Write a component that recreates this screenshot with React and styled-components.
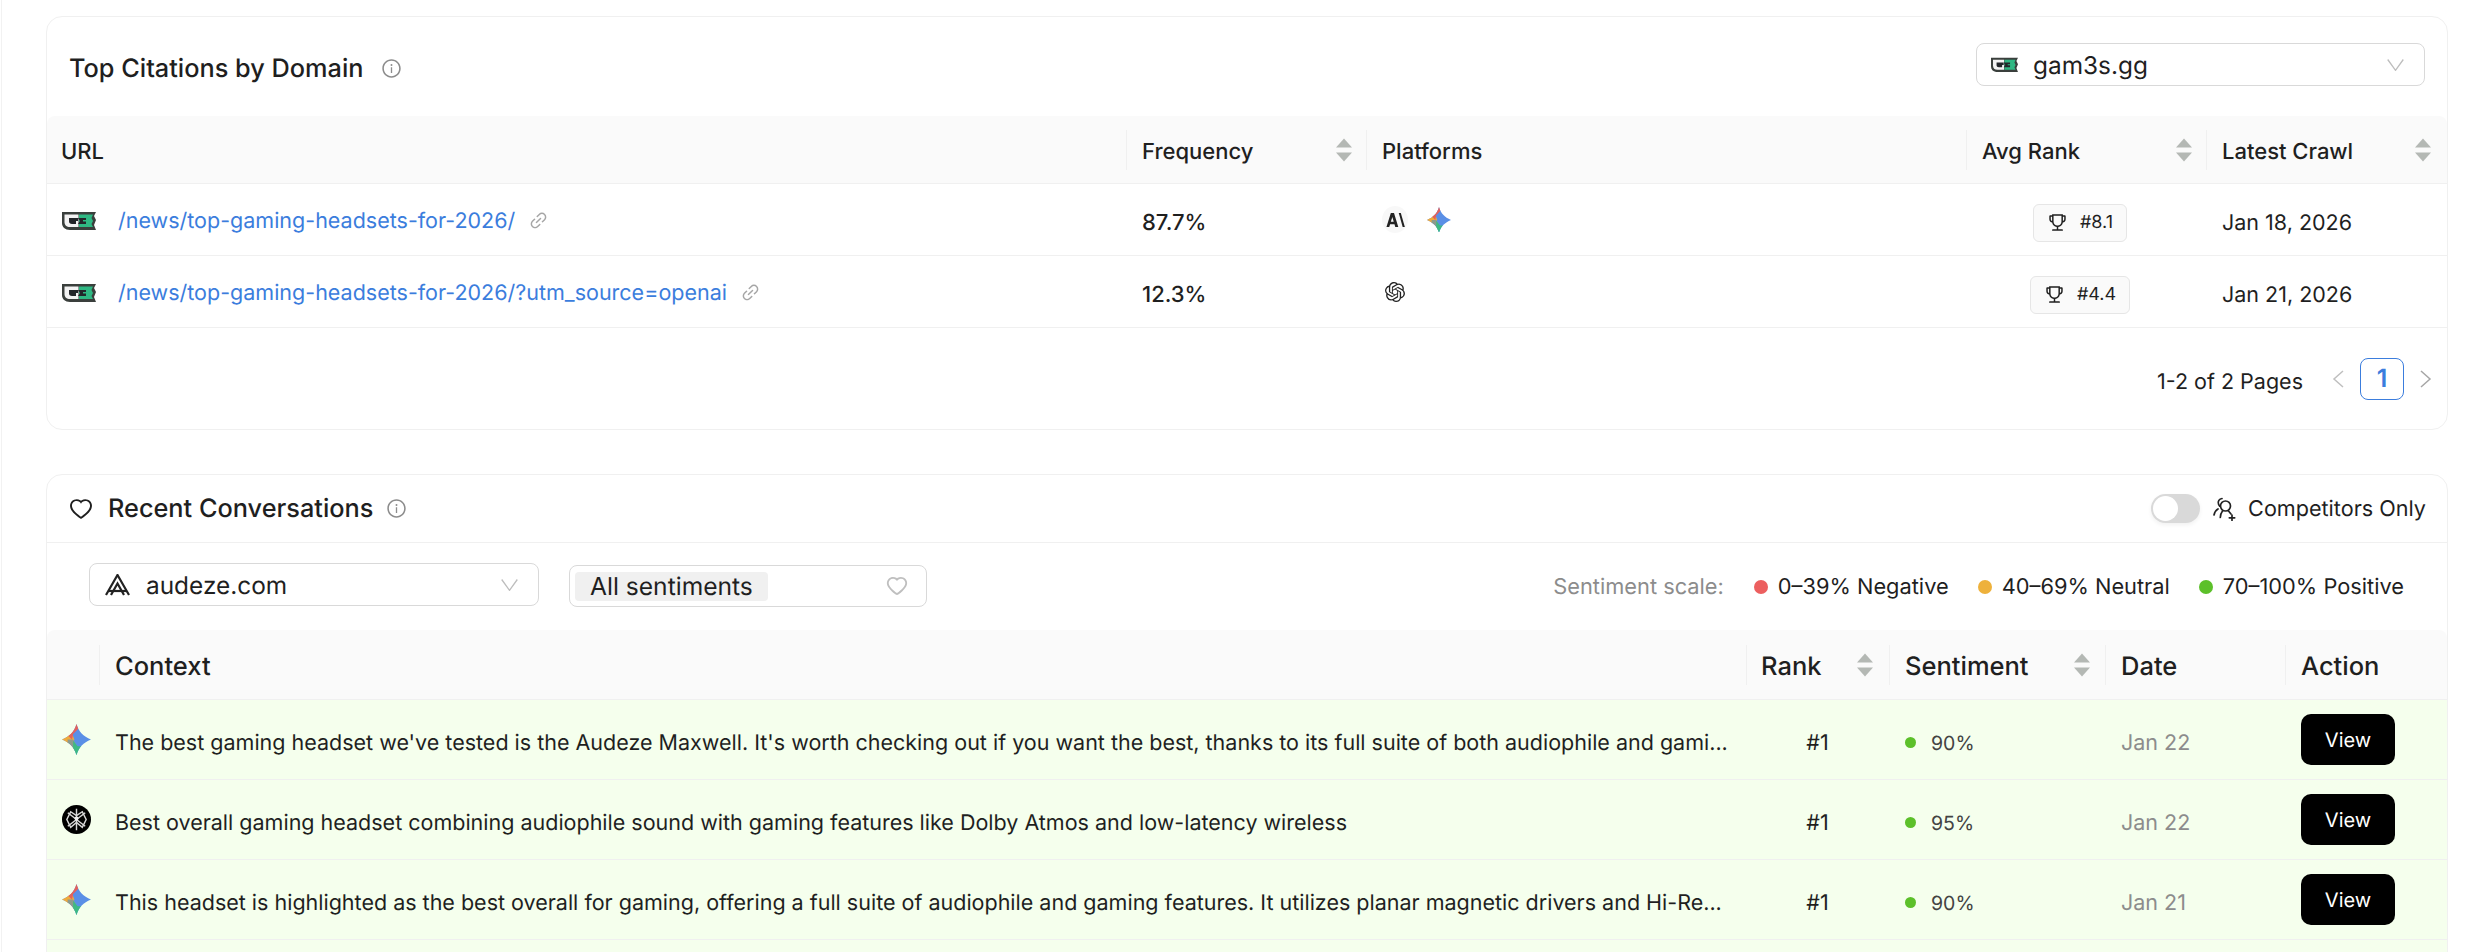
import React from 'react';
import styled, { createGlobalStyle } from 'styled-components';
import {
  AiOutlineInfoCircle,
  AiOutlineHeart,
  AiOutlineLink,
  AiOutlineTrophy,
} from 'react-icons/ai';
import { SiOpenai } from 'react-icons/si';

const GlobalStyle = createGlobalStyle`
  html, body {
    margin: 0;
    height: 952px;
    overflow: hidden;
    background: #fff;
  }
  body {
    font-family: Inter, "Liberation Sans", sans-serif;
    text-rendering: geometricPrecision;
    color: #1f1f1f;
  }
  * { box-sizing: border-box; }
`;

const Page = styled.div`
  height: 952px;
  overflow: hidden;
  margin-left: 1px;
  border-left: 1px solid #f2f2f2;
  padding: 16px 44px 0 44px;
  display: flex;
  flex-direction: column;
  gap: 44px;
  width: 2491px;
`;

const Card = styled.section`
  width: 2402px;
  flex: none;
  border: 1px solid #f0f0f0;
  border-radius: 16px;
  background: #fff;
`;

const CitationsHead = styled.header`
  height: 99px;
  display: flex;
  align-items: center;
  justify-content: space-between;
  padding: 0 22px;
`;

const Title = styled.h2`
  margin: 0;
  font-size: 25.300px;
  font-weight: 500;
  line-height: 30px;
  display: flex;
  align-items: center;
  gap: ${p => p.$gap || 18}px;
`;

const CitationTitle = styled(Title)`
  margin-top: 4px;
`;

const InfoIcon = styled(AiOutlineInfoCircle)`
  font-size: 21px;
  color: #8c8c8c;
  flex: none;
`;

const Select = styled.div`
  width: ${p => p.$width}px;
  height: ${p => p.$height || 43}px;
  border: 1px solid #d9d9d9;
  border-radius: 8px;
  display: flex;
  align-items: center;
  gap: ${p => p.$gap || 15}px;
  padding: 0 ${p => p.$right || 20}px 0 ${p => p.$left || 14}px;
  font-size: 24.400px;
  background: #fff;
  flex: none;
`;

const CitationSelect = styled(Select)`
  margin-bottom: 4px;
`;

const SelectValue = styled.span`
  flex: 1;
`;

const ChevronSvg = styled.svg`
  width: 17px;
  height: 12px;
  flex: none;
`;

const Chevron = () => (
  <ChevronSvg viewBox="0 0 17 12" fill="none" stroke="#bdbdbd" strokeWidth="1.300">
    <path d="M0.700 0.500L8.500 11.300 16.300 0.500" />
  </ChevronSvg>
);

const Table = styled.table`
  width: 2400px;
  table-layout: fixed;
  border-collapse: separate;
  border-spacing: 0;
`;

const Col = styled.col`
  width: ${p => p.$width}px;
`;

const Th = styled.th`
  position: relative;
  height: ${p => p.$height}px;
  padding: ${p => p.$top ?? 4}px 0 0 ${p => p.$pad ?? 16}px;
  background: #fafafa;
  border-bottom: 1px solid #f0f0f0;
  text-align: left;
  font-size: ${p => p.$size}px;
  font-weight: 500;

  &:first-child { border-top-left-radius: 8px; }
  &:last-child { border-top-right-radius: 8px; }

  ${p => p.$divider && `
    &::before {
      content: '';
      position: absolute;
      left: 0;
      top: 50%;
      height: 40px;
      width: 1px;
      transform: translateY(-50%);
      background: #f0f0f0;
    }
  `}
`;

const Sorter = styled.span`
  position: absolute;
  right: ${p => p.$right}px;
  top: 50%;
  transform: translateY(-50%);
  display: flex;
  flex-direction: column;
  gap: 5px;

  &::before, &::after {
    content: '';
    width: 0;
    height: 0;
    border-left: 8px solid transparent;
    border-right: 8px solid transparent;
  }
  &::before { border-bottom: 9px solid #b4b8b4; }
  &::after { border-top: 9px solid #b4b8b4; }
`;

const Row = styled.tr`
  background: ${p => (p.$tint ? '#f5ffed' : '#fff')};
`;

const Td = styled.td`
  height: ${p => p.$height}px;
  padding: ${p => p.$top || 0}px ${p => p.$padRight || 0}px 0 ${p => p.$pad ?? 16}px;
  border-bottom: 1px solid #f0f0f0;
  font-size: ${p => p.$size || 21.5}px;
  font-weight: ${p => p.$weight || 400};
  color: ${p => p.$color || '#1f1f1f'};
  text-align: ${p => p.$align || 'left'};
  white-space: nowrap;
`;

const UrlCell = styled.div`
  display: flex;
  align-items: center;
`;

const UrlLink = styled.a`
  color: #3b7ddd;
  font-size: 21.5px;
  margin-left: 22px;
  text-decoration: none;
`;

const LinkIcon = styled(AiOutlineLink)`
  font-size: 21px;
  color: #a6a6a6;
  margin-left: 13px;
`;

const PlatformRow = styled.div`
  display: flex;
  align-items: center;
  gap: 19px;
`;

const ClaudeMark = styled.span`
  width: 26px;
  height: 27px;
  border-radius: 50%;
  background: #f8f8f8;
  display: flex;
  align-items: center;
  justify-content: center;
`;

const OpenAiMark = styled(SiOpenai)`
  font-size: 20px;
  margin-left: 3px;
  color: #222;
`;

const RankBadge = styled.span`
  display: inline-flex;
  align-items: center;
  gap: 12px;
  height: 38px;
  padding: 0 13px;
  border: 1px solid #e6e6e6;
  border-radius: 6px;
  background: #fafafa;
  font-size: 18px;
  vertical-align: middle;
`;

const TrophyIcon = styled(AiOutlineTrophy)`
  font-size: 21px;
`;

const Pagination = styled.nav`
  height: 101px;
  display: flex;
  align-items: center;
  justify-content: flex-end;
  padding: 0 15px 0 0;
  font-size: 21.5px;
`;

const PageInfo = styled.span`
  margin: 6px 29px 0 0;
`;

const PageChevronSvg = styled.svg`
  width: 13px;
  height: 18px;
  flex: none;
`;

const PageChevron = ({ color, flip }) => (
  <PageChevronSvg viewBox="0 0 13 18" fill="none" stroke={color} strokeWidth="1.500">
    <path d={flip ? 'M2 1l9 8-9 8' : 'M11 1L2 9l9 8'} />
  </PageChevronSvg>
);

const PageNumber = styled.span`
  width: 44px;
  height: 42px;
  margin: 0 15px;
  border: 1px solid #3b7ddd;
  border-radius: 8px;
  display: flex;
  align-items: center;
  justify-content: center;
  color: #3b7ddd;
  font-weight: 600;
  font-size: 25px;
`;

const ConversationsHead = styled.header`
  height: 68px;
  border-bottom: 1px solid #f0f0f0;
  display: flex;
  align-items: center;
  justify-content: space-between;
  padding: 0 21px;
`;

const TitleGroup = styled.div`
  display: flex;
  align-items: center;
`;

const HeartIcon = styled(AiOutlineHeart)`
  font-size: 26px;
  margin-right: 14px;
`;

const ToggleGroup = styled.div`
  display: flex;
  align-items: center;
  font-size: 21.6px;
  gap: 12px;
`;

const Toggle = styled.span`
  position: relative;
  width: 49px;
  height: 29px;
  border-radius: 15px;
  background: #d9d9d9;
  box-shadow: 0 2px 4px rgba(0, 0, 0, 0.06);

  &::after {
    content: '';
    position: absolute;
    left: 2px;
    top: 2px;
    width: 25px;
    height: 25px;
    border-radius: 50%;
    background: #fff;
  }
`;

const FilterBar = styled.div`
  height: 87px;
  display: flex;
  align-items: flex-start;
  padding: 20px 43px 0 42px;
`;

const SentimentSelect = styled(Select)`
  margin: 2px 0 0 30px;
  padding: 0 17px 0 5px;
`;

const SentimentTag = styled.span`
  width: 193px;
  height: 29px;
  background: #f0f0f0;
  border-radius: 4px;
  padding-left: 15px;
  display: flex;
  align-items: center;
  font-size: 24.600px;
`;

const SelectHeart = styled(AiOutlineHeart)`
  margin-left: auto;
  font-size: 24px;
  color: #bfbfbf;
`;

const Scale = styled.div`
  margin: 11px 0 0 auto;
  display: flex;
  align-items: center;
  font-size: 21.800px;
`;

const ScaleLabel = styled.span`
  color: #8c8c8c;
  margin-right: 30px;
`;

const ScaleItem = styled.span`
  display: flex;
  align-items: center;
  gap: 10px;
  margin-left: ${p => (p.$first ? 0 : 29)}px;
`;

const Dot = styled.i`
  width: ${p => p.$size}px;
  height: ${p => p.$size}px;
  border-radius: 50%;
  background: ${p => p.$color};
  flex: none;
`;

const IconCell = styled.div`
  display: flex;
  justify-content: center;
  padding-left: 6px;
`;

const Score = styled.div`
  display: flex;
  align-items: center;
  gap: 15px;
  font-size: 19.500px;
  color: #434343;
`;

const ViewButton = styled.button`
  width: 94px;
  height: 51px;
  border: 0;
  border-radius: 10px;
  background: #000;
  color: #fff;
  font: 400 20px Inter, "Liberation Sans", sans-serif;
  text-rendering: geometricPrecision;
  display: block;
`;

const LegendLabel = styled.span``;

const G3Logo = ({ size = 34 }) => (
  <svg width={size} height={size * 20 / 34} viewBox="0 0 34 20" fill="none">
    <path d="M0 1h34l-2 4 2 4-2 5 2 5H8C3 19 0 16 0 12z" fill="#3a3f3c" />
    <path d="M2.500 3.500h14v12.500H8c-3.500 0-5.500-2-5.500-5z" fill="#f3f3f3" />
    <path d="M17 3.500h14l-1.500 3.500 1.500 3-1.500 3 1.500 3H17z" fill="#2fb883" />
    <path d="M7 7h9v3h-2v3H10C8 13 7 12 7 10.500z" fill="#23262a" />
    <path d="M16 7h8v2h-3v1.500h3V13h-8l2-3z" fill="#23262a" />
  </svg>
);

const GeminiStar = ({ size = 26, id }) => (
  <svg width={size} height={size * 28 / 26} viewBox="0 0 26 28">
    <defs>
      <clipPath id={id}>
        <path d="M13 0C15 7 19 11 26 14 19 17 15 21 13 28 11 21 7 17 0 14 7 11 11 7 13 0z" />
      </clipPath>
    </defs>
    <g clipPath={`url(#${id})`}>
      <rect width="26" height="28" fill="#5a8fe6" />
      <path d="M0 8h9l2 6-2 3H0z" fill="#f0ab3c" />
      <path d="M8 0h8l-2 5-4 4-1 5-4-4z" fill="#e2615d" />
      <path d="M5 14h5l3 5-3 9H5z" fill="#8d9a8c" />
      <path d="M10 15l4 5 4 0-3 8H10z" fill="#3dba84" />
    </g>
  </svg>
);

const ClaudeGlyph = () => (
  <svg width="19" height="14" viewBox="0 0 20 15" fill="#222">
    <path d="M5 0h3.400L13 15H9.800L8.900 12H4.200L3.300 15H0.300zM5 9.400h3.100L6.600 4.200z" />
    <path d="M13.500 0h2.200L20 15h-2.300z" />
  </svg>
);

const AudezeLogo = () => (
  <svg width="25" height="22" viewBox="0 0 25 22" fill="none" stroke="#222" strokeWidth="2.200">
    <path d="M1 21L12.500 1 24 21" />
    <path d="M6 21L12.500 9.500 19 21" />
    <path d="M3 17h19" />
  </svg>
);

const CompetitorIcon = () => (
  <svg width="24" height="24" viewBox="0 0 24 24" fill="none" stroke="#222" strokeWidth="1.700" strokeLinecap="round">
    <circle cx="13.500" cy="9" r="5" />
    <path d="M10 1.500a4 4 0 0 0-3.500 5.500c.3 1 .8 1.600 1.200 2.200" />
    <path d="M6 12c-2 1-3.300 3-4 6" />
    <path d="M10.500 14c-1.200 1.500-2 3.500-2.200 6.500" />
    <path d="M16.500 14l2.500 3" />
    <path d="M20 18v5.500M17.300 20.800h5.400" />
  </svg>
);

const PerplexityLike = () => (
  <svg width="29" height="29" viewBox="0 0 30 30" fill="none">
    <circle cx="15" cy="15" r="15" fill="#000" />
    <g stroke="#d8d8d8" strokeWidth="1.500">
      <path d="M15 4v22M6 8l18 14M24 8L6 22" />
      <path d="M9 7l6 4 6-4 4 8-4 8-6-5-6 5-4-8z" />
    </g>
    <circle cx="15" cy="14" r="2" fill="#eee" />
  </svg>
);

const citations = [
  { path: '/news/top-gaming-headsets-for-2026/', freq: '87.7%', rank: '#8.1', date: 'Jan 18, 2026', platforms: 'both' },
  { path: '/news/top-gaming-headsets-for-2026/?utm_source=openai', freq: '12.3%', rank: '#4.4', date: 'Jan 21, 2026', platforms: 'openai' },
];

const conversations = [
  {
    icon: 'gemini',
    text: "The best gaming headset we've tested is the Audeze Maxwell. It's worth checking out if you want the best, thanks to its full suite of both audiophile and gami...",
    score: '90%',
    date: 'Jan 22',
  },
  {
    icon: 'dark',
    text: 'Best overall gaming headset combining audiophile sound with gaming features like Dolby Atmos and low-latency wireless',
    score: '95%',
    date: 'Jan 22',
  },
  {
    icon: 'gemini',
    text: 'This headset is highlighted as the best overall for gaming, offering a full suite of audiophile and gaming features. It utilizes planar magnetic drivers and Hi-Re...',
    score: '90%',
    date: 'Jan 21',
  },
];

export default function App() {
  return (
    <>
      <GlobalStyle />
      <Page>
        <Card>
          <CitationsHead>
            <CitationTitle>
              Top Citations by Domain
              <InfoIcon />
            </CitationTitle>
            <CitationSelect $width={449} $height={43}>
              <G3Logo size={27} />
              <SelectValue>gam3s.gg</SelectValue>
              <Chevron />
            </CitationSelect>
          </CitationsHead>
          <Table>
            <colgroup>
              <Col $width={1079} />
              <Col $width={240} />
              <Col $width={600} />
              <Col $width={240} />
              <Col $width={241} />
            </colgroup>
            <thead>
              <tr>
                <Th $height={68} $size={22} $pad={14}>URL</Th>
                <Th $height={68} $size={22} $divider>Frequency<Sorter $right={14} /></Th>
                <Th $height={68} $size={22} $divider>Platforms</Th>
                <Th $height={68} $size={22} $divider>Avg Rank<Sorter $right={14} /></Th>
                <Th $height={68} $size={22} $divider>Latest Crawl<Sorter $right={16} /></Th>
              </tr>
            </thead>
            <tbody>
              {citations.map(c => (
                <Row key={c.path}>
                  <Td $height={72} $pad={15} $top={2}>
                    <UrlCell>
                      <G3Logo />
                      <UrlLink>{c.path}</UrlLink>
                      <LinkIcon />
                    </UrlCell>
                  </Td>
                  <Td $height={72} $weight={500} $size={22} $top={6}>{c.freq}</Td>
                  <Td $height={72}>
                    <PlatformRow>
                      {c.platforms === 'both' ? (
                        <>
                          <ClaudeMark><ClaudeGlyph /></ClaudeMark>
                          <GeminiStar size={24} id={`citation-${c.rank}`} />
                        </>
                      ) : (
                        <OpenAiMark />
                      )}
                    </PlatformRow>
                  </Td>
                  <Td $height={72} $align="center" $padRight={28} $top={6}>
                    <RankBadge>
                      <TrophyIcon />
                      {c.rank}
                    </RankBadge>
                  </Td>
                  <Td $height={72} $top={6}>{c.date}</Td>
                </Row>
              ))}
            </tbody>
          </Table>
          <Pagination>
            <PageInfo>1-2 of 2 Pages</PageInfo>
            <PageChevron color="#bfbfbf" />
            <PageNumber>1</PageNumber>
            <PageChevron color="#a6a6a6" flip />
          </Pagination>
        </Card>

        <Card>
          <ConversationsHead>
            <TitleGroup>
              <HeartIcon />
              <Title $gap={13}>
                Recent Conversations
                <InfoIcon />
              </Title>
            </TitleGroup>
            <ToggleGroup>
              <Toggle />
              <CompetitorIcon />
              <LegendLabel>Competitors Only</LegendLabel>
            </ToggleGroup>
          </ConversationsHead>
          <FilterBar>
            <Select $width={450} $left={15} $right={20} $gap={16}>
              <AudezeLogo />
              <SelectValue>audeze.com</SelectValue>
              <Chevron />
            </Select>
            <SentimentSelect $width={358} $height={42}>
              <SentimentTag>All sentiments</SentimentTag>
              <SelectHeart />
            </SentimentSelect>
            <Scale>
              <ScaleLabel>Sentiment scale:</ScaleLabel>
              <ScaleItem $first><Dot $size={14} $color="#ec5f5f" />0–39% Negative</ScaleItem>
              <ScaleItem><Dot $size={14} $color="#eeb13b" />40–69% Neutral</ScaleItem>
              <ScaleItem><Dot $size={14} $color="#5cc02a" />70–100% Positive</ScaleItem>
            </Scale>
          </FilterBar>
          <Table>
            <colgroup>
              <Col $width={52} />
              <Col $width={1647} />
              <Col $width={143} />
              <Col $width={216} />
              <Col $width={180} />
              <Col $width={162} />
            </colgroup>
            <thead>
              <tr>
                <Th $height={70} $size={25.5} $top={3} />
                <Th $height={70} $size={25.5} $top={3} $divider>Context</Th>
                <Th $height={70} $size={25.5} $top={3} $divider $pad={15}>Rank<Sorter $right={16} /></Th>
                <Th $height={70} $size={25.5} $top={3} $divider>Sentiment<Sorter $right={15} /></Th>
                <Th $height={70} $size={25.5} $top={3} $divider>Date</Th>
                <Th $height={70} $size={25.5} $top={3} $divider>Action</Th>
              </tr>
            </thead>
            <tbody>
              {conversations.map((c, i) => (
                <Row key={i} $tint>
                  <Td $height={80} $pad={0}>
                    <IconCell>
                      {c.icon === 'gemini' ? <GeminiStar size={29} id={`row-${i}`} /> : <PerplexityLike />}
                    </IconCell>
                  </Td>
                  <Td $height={80} $top={6}>{c.text}</Td>
                  <Td $height={80} $align="center" $pad={0} $top={6}>#1</Td>
                  <Td $height={80} $top={6}>
                    <Score><Dot $size={11} $color="#5cc02a" />{c.score}</Score>
                  </Td>
                  <Td $height={80} $color="#8c8c8c" $top={6}>{c.date}</Td>
                  <Td $height={80}><ViewButton>View</ViewButton></Td>
                </Row>
              ))}
              <Row $tint>
                <Td $height={80} colSpan={6} />
              </Row>
            </tbody>
          </Table>
        </Card>
      </Page>
    </>
  );
}
